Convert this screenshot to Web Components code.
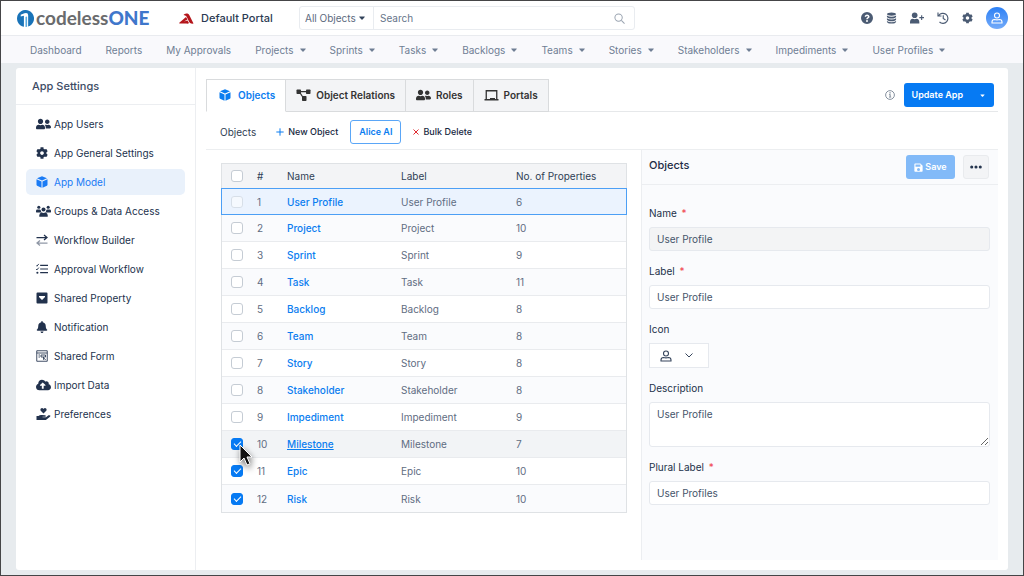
<!DOCTYPE html>
<html lang="en">
<head>
<meta charset="utf-8">
<meta name="viewport" content="width=device-width, initial-scale=1">
<title>codelessONE – App Model</title>
<style>
  html { height: 100%; }
  body { margin: 0; min-height: 100%; box-sizing: border-box; border: 1px solid #454547; background: #e7ebee; color: #3c4b64;
    font: 10px/16px Inter, "Liberation Sans", sans-serif; display: flex; flex-direction: column; }
  main { flex: 1; display: flex; margin: 5px 15px; background: #fff; border-radius: 3px; }
  settings-menu { flex: 0 0 180px; }
  model-page { flex: 1; min-width: 0; }
</style>
</head>
<body>
<top-bar></top-bar>
<main-nav></main-nav>
<main>
  <settings-menu></settings-menu>
  <model-page></model-page>
</main>

<script>
const ICONS = {
  users: ['0 0 640 512', '<path d="M192 256c61.9 0 112-50.1 112-112S253.9 32 192 32 80 82.1 80 144s50.1 112 112 112zm76.8 32h-8.3c-20.8 10-43.9 16-68.5 16s-47.6-6-68.5-16h-8.3C51.6 288 0 339.6 0 403.2V432c0 26.5 21.5 48 48 48h288c26.5 0 48-21.5 48-48v-28.8c0-63.6-51.6-115.2-115.2-115.2zM480 256c53 0 96-43 96-96s-43-96-96-96-96 43-96 96 43 96 96 96zm48 32h-3.8c-13.9 4.8-28.6 8-44.2 8s-30.3-3.2-44.2-8H432c-20.4 0-39.2 5.9-55.7 15.4 24.4 26.3 39.7 61.2 39.7 99.6v38.4c0 2.2-.5 4.3-.6 6.4H592c26.5 0 48-21.5 48-48 0-61.9-50.1-112-112-112z"/>'],
  cog: ['0 0 512 512', '<path d="M487.4 315.7l-42.6-24.6c4.3-23.2 4.3-47 0-70.2l42.6-24.6c4.9-2.8 7.1-8.6 5.5-14-11.1-35.6-30-67.8-54.7-94.6-3.8-4.1-10-5.1-14.8-2.3L380.8 110c-17.9-15.4-38.5-27.3-60.8-35.1V25.8c0-5.6-3.9-10.5-9.4-11.7-36.7-8.2-74.3-7.8-109.2 0-5.5 1.2-9.4 6.1-9.4 11.7V75c-22.2 7.9-42.8 19.8-60.8 35.1L88.7 85.5c-4.9-2.8-11-1.9-14.8 2.3-24.7 26.7-43.6 58.9-54.7 94.6-1.7 5.4.6 11.2 5.5 14L67.3 221c-4.3 23.2-4.3 47 0 70.2l-42.6 24.6c-4.9 2.8-7.1 8.6-5.5 14 11.1 35.6 30 67.8 54.7 94.6 3.8 4.1 10 5.1 14.8 2.3l42.6-24.6c17.9 15.4 38.5 27.3 60.8 35.1v49.2c0 5.6 3.9 10.5 9.4 11.7 36.7 8.2 74.3 7.8 109.2 0 5.5-1.2 9.4-6.1 9.4-11.7v-49.2c22.2-7.9 42.8-19.8 60.8-35.1l42.6 24.6c4.9 2.8 11 1.9 14.8-2.3 24.7-26.7 43.6-58.9 54.7-94.6 1.5-5.5-.7-11.3-5.6-14.1zM256 336c-44.1 0-80-35.9-80-80s35.9-80 80-80 80 35.9 80 80-35.9 80-80 80z"/>'],
  cube: ['0 0 24 24', '<path d="M12 .5 22 4.600 12 9 2 4.600zM1 6.600 11 11v12.500L2.200 19.600Q1 19 1 17.700zM23 6.600 13 11v12.500l8.800-3.900Q23 19 23 17.700z"/>'],
  group: ['0 0 32 24', '<circle cx="6" cy="4" r="3.3"/><circle cx="26" cy="4" r="3.3"/><circle cx="16" cy="9" r="4.3"/><path d="M0 14v-2q0-3 3-3h5q1 0 2 1 0 3 2 5H1q-1 0-1-1zM32 14v-2q0-3-3-3h-5q-1 0-2 1 0 3-2 5h11q1 0 1-1zM7 24v-3q0-5 5-6 4 2 8 0 5 1 5 6v3z"/>'],
  arrows: ['0 0 24 24', '<path fill="none" stroke="currentColor" stroke-width="2.5" d="M1 7h20M16 2l6 5-6 5"/><path opacity=".5" fill="none" stroke="currentColor" stroke-width="2.5" d="M23 18H3M8 13l-6 5 6 5"/>'],
  tasks: ['0 0 26 24', '<path fill="none" stroke="currentColor" stroke-width="2.6" d="M9 4h17M9 12h17M9 20h17"/><path fill="none" stroke="currentColor" stroke-width="2" d="m0 4 2 2 4-5M0 12l2 2 4-5"/><circle cx="3" cy="20" r="2.3"/>'],
  drop: ['0 0 24 24', '<path fill-rule="evenodd" d="M3 1h18q2 0 2 2v18q0 2-2 2H3q-2 0-2-2V3q0-2 2-2zm3 7v2l6 6 6-6V8z"/>'],
  bell: ['0 0 448 512', '<path d="M224 512c35.32 0 63.97-28.65 63.97-64H160.03c0 35.35 28.65 64 63.97 64zm215.39-149.71c-19.32-20.76-55.47-51.99-55.47-154.29 0-77.7-54.48-139.9-127.94-155.16V32c0-17.67-14.32-32-31.98-32s-31.98 14.33-31.98 32v20.84C118.56 68.1 64.08 130.3 64.08 208c0 102.3-36.15 133.53-55.47 154.29-6 6.45-8.66 14.16-8.61 21.71.11 16.4 12.98 32 32.1 32h383.8c19.12 0 32-15.6 32.1-32 .05-7.55-2.61-15.27-8.61-21.71z"/>'],
  form: ['0 0 24 24', '<g fill="none" stroke="currentColor" stroke-width="1.7"><path d="M1.500 1.500h21v21h-21zM1.500 6h21M5 10h3M5 14h3M10 10h9v4h-9zM15 14v5l2-2 2 3"/></g>'],
  cloud: ['0 0 640 512', '<path d="M537.6 226.6c4.1-10.7 6.4-22.4 6.4-34.6 0-53-43-96-96-96-19.7 0-38.1 6-53.3 16.2C367 64.2 315.3 32 256 32c-88.4 0-160 71.6-160 160 0 2.7.1 5.4.2 8.1C40.2 219.8 0 273.2 0 336c0 79.5 64.5 144 144 144h368c70.7 0 128-57.3 128-128 0-61.9-44-113.6-102.4-125.4zM393.4 288H328v112c0 8.8-7.2 16-16 16h-48c-8.8 0-16-7.2-16-16V288h-65.4c-14.3 0-21.4-17.2-11.3-27.3l105.4-105.4c6.2-6.2 16.4-6.2 22.6 0l105.4 105.4c10.1 10.1 2.9 27.3-11.3 27.3z"/>'],
  hand: ['0 0 28 24', '<path d="M14 11 8.500 5.500C6.500 3 9-.5 12 .3q1.300.4 2 1.500.7-1.100 2-1.500c3-.8 5.500 2.700 3.500 5.200zM0 16h4q3-3 7-2l6 .3q2 .5 1.500 2-.5 1-2 1H12v1h7l5-3.600q2-1 3.500.5.600 1-.5 2.200L20 23q-1 1-3 1H0z"/>'],
  nodes: ['0 0 28 24', '<path fill="none" stroke="currentColor" stroke-width="2.5" d="M5 5h18M6 6l9 14"/><rect width="9" height="9" y="1" rx="1.5"/><rect x="19" y="1" width="9" height="9" rx="1.5"/><rect x="11" y="14" width="9" height="10" rx="1.5"/>'],
  laptop: ['0 0 28 24', '<path fill="none" stroke="currentColor" stroke-width="2.6" d="M3.500 20V3.500h21V20M0 21.500h28"/><path d="M11 18h10v4H11z"/>'],
  help: ['0 0 24 24', '<path fill-rule="evenodd" d="M12 0a12 12 0 1 1 0 24 12 12 0 0 1 0-24zM7 8.500l2.500 1.500q2.500-3.500 4.500-1 0 1.300-2 2.300-1.800 1-1.500 3.200h3q0-1.500 1.500-2.200Q17.500 11 17 8.300 16 5 12 5 9 5 7 8.500zM12 16a2 2 0 1 0 0 4 2 2 0 0 0 0-4z"/>'],
  database: ['0 0 24 24', '<path d="M2 3.500Q3 0 12 0t10 3.500Q21 7 12 7T2 3.500zM2 6.500q4 3 10 3t10-3V9q-1 4-10 4T2 9zM2 12.500q4 3 10 3t10-3V15q-1 4-10 4T2 15zM2 18.500q4 3 10 3t10-3V20q-1 4-10 4T2 20z"/>'],
  userPlus: ['0 0 30 24', '<circle cx="10" cy="6" r="6"/><path d="M0 24v-3q0-7 6-7.500 4 2 8 0 6 .5 6 7.500v3zM23.800 6h2.400v4H30v2.400h-3.800v4h-2.400v-4H20V10h3.800z"/>'],
  history: ['0 0 24 24', '<g fill="none" stroke="currentColor" stroke-width="2.3"><path d="M3.500 7A10 10 0 1 1 5 20M2 1v7h7M12.500 6.500V13l4.500 3"/></g>'],
  person: ['0 0 24 24', '<g fill="none" stroke="currentColor" stroke-width="2.2"><circle cx="12" cy="7" r="5"/><path d="M2 22v-2q0-5 5-5 5 1.500 10 0 5 0 5 5v2z"/></g>'],
  search: ['0 0 24 24', '<g fill="none" stroke="currentColor" stroke-width="2.2"><circle cx="10" cy="10" r="8"/><path d="m16 16 7 7"/></g>'],
  info: ['0 0 24 24', '<circle cx="12" cy="12" r="10.5" fill="none" stroke="currentColor" stroke-width="2.2"/><path d="M10.600 5.500h3v3h-3zM9.500 10h4v6H15v2H9.500v-2H11v-4H9.500z"/>'],
  save: ['0 0 24 24', '<path fill-rule="evenodd" d="M3 1h14l6 6v14q0 2-2 2H3q-2 0-2-2V3q0-2 2-2zm1 3v6h13V4zm8 9a4 4 0 1 0 0 8 4 4 0 0 0 0-8z"/>'],
  plus: ['0 0 24 24', '<path fill="none" stroke="currentColor" stroke-width="3" d="M12 1v22M1 12h22"/>'],
  cross: ['0 0 24 24', '<path fill="none" stroke="currentColor" stroke-width="4" d="m2 2 20 20M22 2 2 22"/>'],
  dots: ['0 0 28 8', '<circle cx="4" cy="4" r="3.6"/><circle cx="14" cy="4" r="3.6"/><circle cx="24" cy="4" r="3.6"/>'],
  caret: ['0 0 12 8', '<path d="M1 1h10q1 .5.5 1.200L7 7q-1 .8-2 0L.5 2.200Q0 1.500 1 1z"/>'],
  chevron: ['0 0 16 10', '<path fill="none" stroke="currentColor" stroke-width="2" d="m1 1 7 7 7-7"/>'],
  swoosh: ['0 0 30 22', '<path fill="#b4161b" d="M9 4q2-4 8-3 3 1 4 4l8 16q-6 1-8-2L15 7q-2-3-6-3z"/><path fill="#b4161b" d="M0 20 14 8l3 5-7 4 7-2 3 5q-2 2-5 1H3q-2 0-3-1z"/>'],
  mark: ['0 0 32 32', '<path fill="#1973b8" d="M13 31.700A16 16 0 1 1 21 31.200V10q0-6-7-4L7 9v3l6-1z"/><path fill="#57a9df" d="M16 13q3-2 3 1v17.700l-3 .3z"/>'],
};

function define(name, css, html) {
  const tpl = document.createElement('template');
  customElements.define(name, class extends HTMLElement {
    connectedCallback() {
      if (this.shadowRoot) return;
      tpl.innerHTML = `<style>:host,*{box-sizing:border-box} button,input,select,textarea{font:inherit;color:inherit} a{text-decoration:none;color:inherit} ${css}</style>${typeof html === 'function' ? html(this) : html}`;
      this.attachShadow({ mode: 'open' }).append(tpl.content.cloneNode(true));
    }
  });
}

define('ui-icon', `:host{display:inline-flex;flex:none;align-items:center;justify-content:center} svg{display:block;width:100%;height:100%;fill:currentColor}`,
  el => { const [box, body] = ICONS[el.getAttribute('name')]; return `<svg viewBox="${box}" aria-hidden="true">${body}</svg>`; });

define('top-bar', `
  :host{display:flex;align-items:center;height:35px;padding:0 15px 0 16px;background:#fff;border-bottom:1px solid #e9ebef}
  .logo{display:flex;align-items:center;gap:2px;width:162px;font:700 19px/24px Lato,sans-serif;color:#6a6b6d}
  .logo ui-icon{width:17px;height:17px} .logo b{color:#3f77cb}
  .portal{display:flex;align-items:center;gap:7px;width:120px;font-size:11px;color:#2b3a52;font-weight:500}
  .portal ui-icon{width:15px;height:11px}
  form{display:flex;align-items:center;flex:0 1 336px;height:24px;border:1px solid #e9ecf0;border-radius:3px}
  .scope{display:flex;align-items:center;height:100%;width:74px;border-right:1px solid #e9ecf0;padding-left:5px;position:relative;color:#5c6a7e}
  select{appearance:none;border:0;background:none;padding:0 12px 0 0;width:66px;outline:0}
  .scope ui-icon{position:absolute;right:8px;width:6px;height:4px;color:#33435b;pointer-events:none}
  input{flex:1;min-width:0;border:0;outline:0;background:none;padding:0 6px} input::placeholder{color:#66758a}
  form>ui-icon{width:11px;height:11px;margin-right:9px;color:#9aa4b1}
  .tools{display:flex;align-items:center;gap:13px;margin-left:auto;color:#4b5b73}
  button{border:0;background:none;padding:0;display:flex} .tools ui-icon{width:12px;height:12px} .tools .wide{width:14px} .tools .db,.tools .gear{width:11px}
  .avatar{width:22px;height:22px;border-radius:50%;background:linear-gradient(#2c80f5,#74abf9);color:#fff;align-items:center;justify-content:center}`,
  `<a class="logo" href="#"><ui-icon name="mark"></ui-icon><span>codeless<b>ONE</b></span></a>
   <div class="portal"><ui-icon name="swoosh"></ui-icon>Default Portal</div>
   <form role="search"><div class="scope"><select aria-label="Search in"><option>All Objects</option></select><ui-icon name="caret"></ui-icon></div>
   <input type="search" placeholder="Search" aria-label="Search"><ui-icon name="search"></ui-icon></form>
   <div class="tools"><button aria-label="Help"><ui-icon name="help"></ui-icon></button><button aria-label="Data"><ui-icon class="db" name="database"></ui-icon></button>
   <button aria-label="Invite"><ui-icon class="wide" name="userPlus"></ui-icon></button><button aria-label="History"><ui-icon name="history"></ui-icon></button>
   <button aria-label="Settings"><ui-icon class="gear" name="cog"></ui-icon></button><button class="avatar" aria-label="Account"><ui-icon name="person"></ui-icon></button></div>`);

define('main-nav', `
  :host{display:block;background:#f9f9fc;height:27px}
  nav{display:flex;align-items:center;gap:24px;height:100%;padding:0 29px;color:#6f7e94}
  a{display:flex;align-items:center;gap:6px;white-space:nowrap} ui-icon{width:6px;height:4px}`,
  `<nav>${['Dashboard','Reports','My Approvals','Projects','Sprints','Tasks','Backlogs','Teams','Stories','Stakeholders','Impediments','User Profiles']
    .map((t, i) => `<a href="#">${t}${i > 2 ? '<ui-icon name="caret"></ui-icon>' : ''}</a>`).join('')}</nav>`);

define('settings-menu', `
  :host{display:block;border-right:1px solid #eceef1}
  h2{margin:0;height:37px;padding:0 16px;font:500 11px/37px Inter,sans-serif;border-bottom:1px solid #eceef1}
  nav{display:grid;gap:3px;padding:6px 10px}
  a{display:flex;align-items:center;height:26px;padding:0 10px;border-radius:5px;color:#22324d;white-space:nowrap}
  a[aria-current]{background:#e9f1fb;color:#1a7bf5}
  .slot{width:18px;display:flex} ui-icon{height:12px;width:12px} .wide{width:15px}`,
  `<h2>App Settings</h2><nav>${[['App Users','users',1],['App General Settings','cog'],['App Model','cube'],['Groups & Data Access','group',1],['Workflow Builder','arrows'],['Approval Workflow','tasks'],
    ['Shared Property','drop'],['Notification','bell'],['Shared Form','form'],['Import Data','cloud',1],['Preferences','hand',1]]
    .map(([t, i, w]) => `<a href="#"${i === 'cube' ? ' aria-current="page"' : ''}><span class="slot"><ui-icon class="${w ? 'wide' : ''}" name="${i}"></ui-icon></span>${t.replace('&', '&amp;')}</a>`).join('')}</nav>`);

define('model-page', `
  :host{display:flex;flex-direction:column;padding:11px 10px 10px 10px}
  .tabs{display:flex;align-items:flex-end;height:33px;border-bottom:1px solid #e6e8ea}
  [role=tablist]{display:flex;height:33px;margin-bottom:-1px}
  [role=tab]{display:flex;align-items:center;gap:5px;padding:0 10px 2px;border:1px solid #d9dbdd;border-left-width:0;background:#f3f4f6;color:#333;font-weight:600;white-space:nowrap}
  [role=tab]:first-child{border-left-width:1px;border-bottom-color:#fff;background:#fff;color:#0b7df0;padding:0 10px 2px 12px;gap:7px}
  [role=tab] ui-icon{height:12px;width:15px} [role=tab]:first-child ui-icon{width:12px}
  .update{margin-left:auto;display:flex;align-items:center;gap:9px;align-self:flex-start;color:#7a8695;margin-right:4px;padding-top:4px}
  .update ui-icon{width:10px;height:10px}
  .split{display:flex;height:24px;background:#067af3;border-radius:3px;overflow:hidden;color:#fff;font-weight:600;font-size:9px}
  .split button{border:0;background:none;padding:0 8px;white-space:nowrap} .split button+button{padding:0 9px} .split ui-icon{width:5px;height:3px;display:block}
  .bar{display:flex;align-items:center;gap:12px;height:38px;padding:3px 0 0 14px;border-bottom:1px solid #eceef0;color:#182842;font-weight:500;font-size:9px}
  .bar h3{font:400 10px/16px Inter,sans-serif;color:#303e54;margin:0 8px 0 0}
  .bar button{display:flex;align-items:center;gap:4px;border:0;background:none;padding:0;height:24px;white-space:nowrap}
  .bar .ai{border:1px solid #5aa6f7;border-radius:3px;padding:0 8px;color:#0b7df0;font-weight:600}
  .plus{width:8px;height:8px;color:#0b7df0} .cross{width:6px;height:6px;color:#e02b30}
  .body{flex:1;display:flex;min-height:0} object-table{flex:1 1 406px;margin:13px 14px 0 15px;min-width:0} object-form{flex:0 1 357px}`,
  `<div class="tabs"><div role="tablist"><button role="tab" aria-selected="true"><ui-icon name="cube"></ui-icon>Objects</button><button role="tab"><ui-icon name="nodes"></ui-icon>Object Relations</button>
   <button role="tab"><ui-icon name="users"></ui-icon>Roles</button><button role="tab"><ui-icon name="laptop"></ui-icon>Portals</button></div>
   <div class="update"><ui-icon name="info"></ui-icon><div class="split"><button>Update App</button><button aria-label="More update options"><ui-icon name="caret"></ui-icon></button></div></div></div>
   <div class="bar"><h3>Objects</h3><button><ui-icon class="plus" name="plus"></ui-icon>New Object</button><button class="ai">Alice AI</button><button><ui-icon class="cross" name="cross"></ui-icon>Bulk Delete</button></div>
   <div class="body"><object-table></object-table><object-form></object-form></div>`);

const ROWS = [['User Profile',6],['Project',10],['Sprint',9],['Task',11],['Backlog',8],['Team',8],['Story',8],['Stakeholder',8],['Impediment',9],['Milestone',7],['Epic',10],['Risk',10]];
define('object-table', `
  :host{display:block}
  table{width:100%;border-collapse:separate;border-spacing:0;table-layout:fixed;border:1px solid #dfe2e5;color:#5f6d82}
  th,td{padding:0;text-align:left;font-weight:400;height:27px;border-bottom:1px solid #e9ebee}
  th{height:24px;background:#f3f4f6;color:#2f3e55;border:0}
  th:first-child,td:first-child{padding-left:9px}
  tr:nth-child(even) td{background:#fafbfd} tr:last-child td{border-bottom:0}
  tr.active td{background:#ebf3fe;border-top:1px solid #4c9ff5;border-bottom-color:#4c9ff5}
  tr.active td:first-child{box-shadow:-1px 0 #4c9ff5} tr.active td:last-child{box-shadow:1px 0 #4c9ff5}
  tr.hover td{background:#f2f4f6} tr.hover a{text-decoration:underline;text-underline-offset:1px}
  a{color:#0b7df0;font-weight:500}
  input{appearance:none;display:block;margin:0;width:12px;height:12px;border:1px solid #c5ccd4;border-radius:3px;background:#fff}
  tr.active input{opacity:.5}
  input:checked{background:#067af3;border-color:#067af3}
  input:checked::after{content:"";display:block;width:6px;height:3px;margin:2px;border:solid #fff;border-width:0 0 1px 1px;transform:rotate(-45deg)}
  .pick{position:relative} .cursor{position:absolute;left:17px;top:13px;width:14px;height:22px;z-index:1;filter:drop-shadow(1px 3px 3px #0008);pointer-events:none}`,
  `<table><colgroup><col style="width:35px"><col style="width:30px"><col style="width:114px"><col style="width:115px"><col></colgroup>
   <thead><tr><th><input type="checkbox" aria-label="Select all"></th><th>#</th><th>Name</th><th>Label</th><th>No. of Properties</th></tr></thead>
   <tbody>${ROWS.map(([n, c], i) => `<tr class="${i === 0 ? 'active' : i === 9 ? 'hover' : ''}"><td class="pick"><input type="checkbox" aria-label="Select ${n}"${i > 8 ? ' checked' : ''}${i ? '' : ' disabled'}>${i === 9 ? '<svg class="cursor" viewBox="0 0 14 22"><path d="M1 1v17l4-4 3 7 3-1.300-3-6.700h5z" fill="#111" stroke="#fff" stroke-width="1"/></svg>' : ''}</td><td>${i + 1}</td><td><a href="#">${n}</a></td><td>${n}</td><td>${c}</td></tr>`).join('')}</tbody></table>`);

define('form-field', `
  :host{display:block}
  label{display:block;height:16px;margin-bottom:6px;color:#22314a} i{color:#f0414d;font-style:normal;margin-left:2px}
  input,textarea{display:block;width:100%;height:24px;padding:0 7px;border:1px solid #e6e9ee;border-radius:3px;background:#fff;color:#45546a;outline:0}
  input[readonly]{background:#f3f4f5}
  textarea{height:45px;padding:3px 7px;resize:vertical}`,
  el => { const ro = el.hasAttribute('locked') ? ' readonly' : '';
    const v = el.getAttribute('value');
    return `<label for="f">${el.getAttribute('label')}${el.hasAttribute('required') ? ' <i>*</i>' : ''}</label>${el.hasAttribute('multiline') ? `<textarea id="f">${v}</textarea>` : `<input id="f" value="${v}"${ro}>`}`; });

define('object-form', `
  :host{display:block;background:#fafbfd;border-left:1px solid #eceef1}
  header{display:flex;align-items:center;height:35px;padding:0 9px 0 7px;border-bottom:1px solid #eceef1}
  h3{margin:0 auto 4px 0;font:500 11px/16px Inter,sans-serif;color:#1d2c46}
  header button{display:flex;align-items:center;justify-content:center;gap:2px;height:24px;border:0;border-radius:3px}
  .save{width:49px;background:#82baf8;color:#fff;font-weight:600;font-size:9px;padding:0} .save ui-icon{width:9px;height:9px}
  .more{width:26px;margin-left:8px;background:#f3f4f6;border:1px solid #e9ebee!important;color:#26364f;padding:0} .more ui-icon{width:12px;height:4px}
  .fields{display:grid;gap:12px;padding:20px 8px 0 7px}
  .label{height:16px;margin-bottom:6px;color:#22314a}
  .pick{display:flex;align-items:center;gap:13px;width:60px;height:25px;padding:0 10px;border:1px solid #e6e9ee;background:#fff;color:#36455c}
  .pick ui-icon{width:12px;height:12px} .pick ui-icon+ui-icon{width:8px;height:5px}`,
  `<header><h3>Objects</h3><button class="save"><ui-icon name="save"></ui-icon>Save</button><button class="more" aria-label="More"><ui-icon name="dots"></ui-icon></button></header>
   <div class="fields"><form-field label="Name" value="User Profile" required locked></form-field><form-field label="Label" value="User Profile" required></form-field>
   <div><div class="label" id="icon">Icon</div><button class="pick" aria-labelledby="icon"><ui-icon name="person"></ui-icon><ui-icon name="chevron"></ui-icon></button></div>
   <form-field label="Description" value="User Profile" multiline></form-field><form-field label="Plural Label" value="User Profiles" required></form-field></div>`);
</script>
</body>
</html>
